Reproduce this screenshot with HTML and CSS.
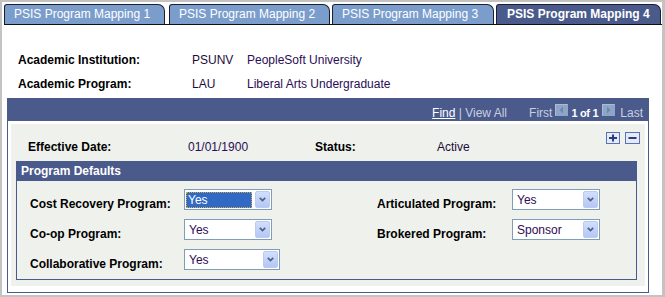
FILE: index.html
```html
<!DOCTYPE html>
<html lang="en">
<head>
  <meta charset="UTF-8" />
  <title>PSIS Program Mapping</title>
  <link rel="stylesheet" href="styles.css">
</head>
<body>
  <div class="page">

    <div class="tabs">
      <div class="tab t1">PSIS Program Mapping 1</div>
      <div class="tab t2">PSIS Program Mapping 2</div>
      <div class="tab t3">PSIS Program Mapping 3</div>
      <div class="tab t4 active">PSIS Program Mapping 4</div>
    </div>

    <div class="keys">
      <div class="key-row">
        <span class="key-label">Academic Institution:</span>
        <span class="key-code">PSUNV</span>
        <span class="key-val">PeopleSoft University</span>
      </div>
      <div class="key-row">
        <span class="key-label">Academic Program:</span>
        <span class="key-code">LAU</span>
        <span class="key-val">Liberal Arts Undergraduate</span>
      </div>
    </div>

    <div class="scroll">
      <div class="scroll-head">
        <a href="#" class="find">Find</a>
        <span class="nav-text">&nbsp;|&nbsp;View All</span>
        <span class="nav-text first">First</span>
        <span class="arrow">
          <svg width="13" height="12" viewBox="0 0 13 12"><rect x="0" y="0" width="13" height="12" fill="#8ea5c6"/><path d="M0.5 11.5V0.5H12.5" fill="none" stroke="#a9bbd6"/><polygon points="8,2.5 4.5,6 8,9.5" fill="#6b89b2"/></svg>
        </span>
        <span class="count">1 of 1</span>
        <span class="arrow">
          <svg width="13" height="12" viewBox="0 0 13 12"><rect x="0" y="0" width="13" height="12" fill="#8ea5c6"/><path d="M0.5 11.5V0.5H12.5" fill="none" stroke="#a9bbd6"/><polygon points="5,2.5 8.5,6 5,9.5" fill="#6b89b2"/></svg>
        </span>
        <span class="nav-text last">Last</span>
      </div>

      <div class="scroll-body">
        <div class="eff-row">
          <span class="eff-label">Effective Date:</span>
          <span class="eff-val">01/01/1900</span>
          <span class="status-label">Status:</span>
          <span class="status-val">Active</span>
          <span class="pm">
            <svg width="14" height="12" viewBox="0 0 14 12"><rect x="0.5" y="0.5" width="13" height="11" fill="#e6eaf5" stroke="#5b70ba"/><path d="M3 6H11M7 2.5V9.5" stroke="#2b3b82" stroke-width="2"/></svg>
            <svg width="15" height="12" viewBox="0 0 15 12"><rect x="0.5" y="0.5" width="14" height="11" fill="#e6eaf5" stroke="#5b70ba"/><path d="M3.5 6H11.5" stroke="#2b3b82" stroke-width="2"/></svg>
          </span>
        </div>

        <div class="group">
          <div class="group-head">Program Defaults</div>
          <div class="group-body">
            <span class="f-label">Cost Recovery Program:</span>
            <div class="dd">
              <span class="v sel">Yes</span>
              <span class="btn"><svg width="7" height="5" viewBox="0 0 7 5"><polyline points="0.8,0.8 3.5,3.6 6.2,0.8" fill="none" stroke="#4d6187" stroke-width="1.7"/></svg></span>
            </div>
            <span class="f-label">Articulated Program:</span>
            <div class="dd">
              <span class="v">Yes</span>
              <span class="btn"><svg width="7" height="5" viewBox="0 0 7 5"><polyline points="0.8,0.8 3.5,3.6 6.2,0.8" fill="none" stroke="#4d6187" stroke-width="1.7"/></svg></span>
            </div>

            <span class="f-label">Co-op Program:</span>
            <div class="dd">
              <span class="v">Yes</span>
              <span class="btn"><svg width="7" height="5" viewBox="0 0 7 5"><polyline points="0.8,0.8 3.5,3.6 6.2,0.8" fill="none" stroke="#4d6187" stroke-width="1.7"/></svg></span>
            </div>
            <span class="f-label">Brokered Program:</span>
            <div class="dd">
              <span class="v">Sponsor</span>
              <span class="btn"><svg width="7" height="5" viewBox="0 0 7 5"><polyline points="0.8,0.8 3.5,3.6 6.2,0.8" fill="none" stroke="#4d6187" stroke-width="1.7"/></svg></span>
            </div>

            <span class="f-label">Collaborative Program:</span>
            <div class="dd wide">
              <span class="v">Yes</span>
              <span class="btn"><svg width="7" height="5" viewBox="0 0 7 5"><polyline points="0.8,0.8 3.5,3.6 6.2,0.8" fill="none" stroke="#4d6187" stroke-width="1.7"/></svg></span>
            </div>
          </div>
        </div>
      </div>
    </div>

  </div>
</body>
</html>
```

FILE: styles.css
```css
body {
  margin: 0;
  background: #c3c3c3;
  font-family: "Liberation Sans", Arial, sans-serif;
  font-size: 12px;
  color: #000;
}

.page {
  margin: 2px 3px 0 2px;
  height: 293px;
  padding: 2px 0 0 2px;
  box-sizing: border-box;
  background: #fff;
}

/* tabs */
.tabs {
  display: flex;
  height: 20px;
  border-bottom: 1px solid #111;
}

.tab {
  box-sizing: border-box;
  height: 20px;
  padding-left: 9px;
  border: 1px solid #1d1d33;
  border-bottom: none;
  border-radius: 3px 7px 0 0;
  background: #7b9dcc;
  color: #fff;
  line-height: 19px;
  white-space: nowrap;
}

.t1 { width: 161px; margin-right: 4px; }
.t2 { width: 161px; margin-right: 2px; }
.t3 { width: 162px; margin-right: 2px; }
.t4 { width: 165px; padding-left: 10px; }

.tab.active {
  background: #4a5a8b;
  font-weight: bold;
}

/* key fields */
.keys {
  margin: 23px 0 0 14px;
}

.key-row {
  display: flex;
  height: 24px;
  line-height: 24px;
}

.key-label { width: 174px; font-weight: bold; }
.key-code { width: 55px; color: #1c0c36; }
.key-val { color: #2b0d55; }

/* scroll area */
.scroll {
  margin: 2px 0 0 3px;
  width: 642px;
  height: 195px;
  box-sizing: border-box;
  border: 1px solid #4a5a8b;
}

.scroll-head {
  display: flex;
  justify-content: flex-end;
  align-items: flex-start;
  height: 22px;
  box-sizing: border-box;
  padding: 7px 5px 0 0;
  background: #4a5a8b;
  line-height: 14px;
  white-space: nowrap;
}

.find {
  color: #fff;
  text-decoration: underline;
}

.nav-text { color: #c9cfe0; }
.first { margin-left: 22px; }
.last { margin-left: 5px; }

.arrow {
  display: block;
  height: 12px;
  margin: -2px 0 0 3px;
}

.count {
  margin: 0 0 0 3px;
  color: #fff;
  font-weight: bold;
  font-size: 11px;
  letter-spacing: -0.3px;
}

.count + .arrow { margin-left: 4px; }

.scroll-body {
  margin: 3px 3px 6px;
  height: 162px;
  background: #eff1ec;
}

.eff-row {
  display: flex;
  align-items: flex-start;
  height: 37px;
  box-sizing: border-box;
  padding: 16px 5px 0 17px;
  line-height: 14px;
}

.eff-label { width: 160px; font-weight: bold; }
.eff-val { width: 127px; color: #2b0d55; }
.status-label { width: 122px; font-weight: bold; }
.status-val { color: #1c0c36; }

.pm {
  display: flex;
  gap: 5px;
  margin: -8px 0 0 auto;
}

.pm svg { display: block; }

/* program defaults group */
.group {
  margin-left: 5px;
  width: 621px;
  height: 119px;
  box-sizing: border-box;
  border: 1px solid #4a5a8b;
}

.group-head {
  height: 19px;
  padding-left: 4px;
  background: #4a5a8b;
  color: #fff;
  font-weight: bold;
  line-height: 19px;
}

.group-body {
  display: grid;
  grid-template-columns: 154px 193px 135px 88px;
  grid-auto-rows: 21px;
  row-gap: 9px;
  padding: 8px 0 0 13px;
}

.f-label {
  padding-top: 8px;
  line-height: 14px;
  font-weight: bold;
  white-space: nowrap;
}

.dd {
  display: flex;
  align-items: center;
  width: 88px;
  height: 21px;
  box-sizing: border-box;
  border: 1px solid #7f9db9;
  background: #fff;
}

.dd.wide { width: 96px; }

.dd .v {
  padding-left: 4px;
  color: #2b0d55;
  line-height: 16px;
}

.dd .v.sel {
  width: 66px;
  height: 16px;
  margin-left: 1px;
  padding-left: 2px;
  box-sizing: border-box;
  background: #316ac5;
  color: #fff;
  outline: 1px dotted #d8a848;
  outline-offset: -1px;
}

.dd .btn {
  display: flex;
  align-items: center;
  justify-content: center;
  width: 15px;
  height: 17px;
  margin: 0 1px 0 auto;
  box-sizing: border-box;
  border: 1px solid #bccbf0;
  border-radius: 2px;
  background: linear-gradient(#d2defd, #b4c7f3);
}

.dd .btn svg { display: block; }
```
